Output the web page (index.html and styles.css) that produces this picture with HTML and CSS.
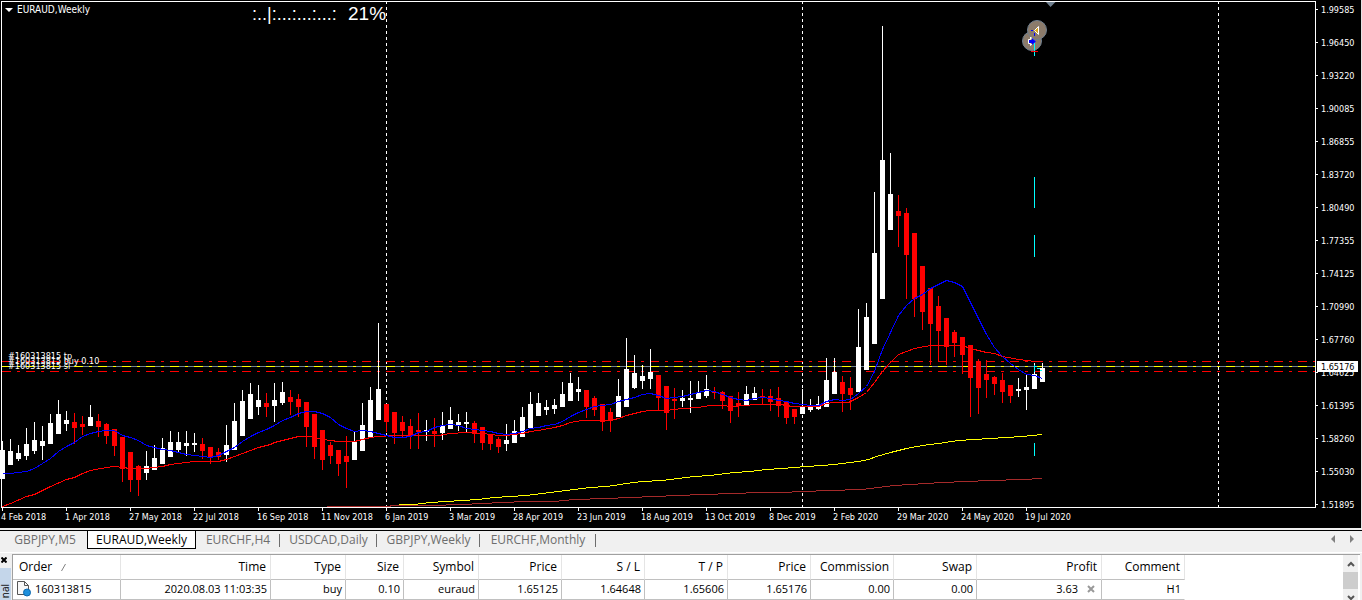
FILE: index.html
```html
<!DOCTYPE html>
<html lang="en">
<head>
<meta charset="utf-8">
<title>EURAUD,Weekly</title>
<link rel="stylesheet" href="styles.css">
</head>
<body>
<main class="chart">
<svg class="chart-svg" viewBox="0 0 1361 528" role="img" aria-label="EURAUD weekly candlestick chart">
  <g class="crisp">
    <path class="separator" d="M386.5 1V507M802.5 1V507M1218.5 1V507"/>
    <path class="level" d="M2 361.5H1315M2 371.5H1315"/>
    <path class="price-line" d="M2 366.5H1315"/>
    <path class="open-line" d="M2 366.5H1315"/>
  </g>
  <g id="candles" class="crisp"></g>
  <g id="averages" class="crisp" transform="translate(.5 .5)"></g>
  <g class="crisp">
    <path class="signal" d="M1034.5 177V208M1034.5 235V257M1034.5 443V456M1034.5 365V372M1035 366.5H1037M1037 368.5H1040M1040 370.5H1042"/>
    <path class="frame" d="M1.5 508V1.5H1315.5V507.5H1"/>
  </g>
  <circle class="pin" cx="1032" cy="41" r="9.5"/>
  <circle class="pin" cx="1037" cy="30" r="9.5"/>
  <path class="pin-left" d="M1038.500 26.500V34.500L1034.500 30.500Z"/>
  <path class="pin-blue" d="M1031 30H1033V31H1031ZM1034 33H1035V36H1034Z"/>
  <path class="pin-right-edge" d="M1028.500 39.500H1030.500V37L1035 41.500L1030.500 45.500V43.500H1028.500Z"/>
  <path class="pin-blue" d="M1029 40H1032V38L1036 41.500L1032 45V43H1029Z"/>
  <path class="signal crisp" d="M1034.5 43V56"/>
  <path class="pin-mark crisp" d="M1031 51.500H1038"/>
  <path class="shift" d="M1046 2H1055.500L1050.500 7Z"/>
  <path class="menu-mark" d="M5 8H13L9 12Z"/>
  <text class="label title" x="17" y="13">EURAUD,Weekly</text>
  <text class="gauge" x="252" y="20">:..|:...:...:...:</text>
  <text class="gauge-value" x="348" y="20">21%</text>
  <text class="label" x="8" y="359">#160313815 tp</text>
  <text class="label" x="8" y="364">#160313815 buy 0.10</text>
  <text class="label" x="8" y="369">#160313815 sl</text>
  <g id="price-axis"></g>
  <rect class="quote-box" x="1317" y="361" width="41" height="11"/>
  <text class="label quote" x="1321" y="370">1.65176</text>
  <g id="time-axis"></g>
</svg>
</main>
<nav class="tabs">
  <button class="tab tab-a" type="button">GBPJPY,M5</button>
  <button class="tab tab-b active" type="button">EURAUD,Weekly</button>
  <button class="tab tab-c ruled" type="button">EURCHF,H4</button>
  <button class="tab tab-d ruled" type="button">USDCAD,Daily</button>
  <button class="tab tab-e ruled" type="button">GBPJPY,Weekly</button>
  <button class="tab tab-f ruled" type="button">EURCHF,Monthly</button>
  <div class="tab-scroll">
    <button class="icon-button" type="button" aria-label="Previous tabs"><svg width="4" height="8"><path d="M4 0V8L0 4Z"/></svg></button>
    <button class="icon-button" type="button" aria-label="Next tabs"><svg width="4" height="8"><path d="M0 0V8L4 4Z"/></svg></button>
  </div>
</nav>
<section class="terminal">
  <aside class="side">
    <button class="close" type="button" aria-label="Close"><svg width="6" height="6"><path d="M.5 .5L5.500 5.500M5.500 .5L.5 5.500"/></svg></button>
    <div class="side-title"><span class="side-text">nal</span></div>
  </aside>
  <div class="orders">
    <table class="grid">
      <colgroup><col class="w-order"><col class="w-time"><col class="w-mid"><col class="w-size"><col class="w-mid"><col class="w-num"><col class="w-num"><col class="w-num"><col class="w-num"><col class="w-num"><col class="w-num"><col class="w-profit"><col class="w-num"></colgroup>
      <thead><tr><th class="first">Order <svg class="sort" width="5" height="7"><path d="M.5 7L4.500 0"/></svg></th><th>Time</th><th>Type</th><th>Size</th><th>Symbol</th><th>Price</th><th>S / L</th><th>T / P</th><th>Price</th><th>Commission</th><th>Swap</th><th>Profit</th><th>Comment</th></tr></thead>
      <tbody><tr><td class="first"><span class="order"><svg width="15" height="16"><path class="sheet" d="M1.500 .5H8.500L12.500 4.500V13.500H1.500Z"/><path class="fold" d="M8.500 .5V4.500H12.500"/><circle class="ball" cx="11" cy="11.500" r="3.500"/></svg>160313815</span></td><td>2020.08.03 11:03:35</td><td>buy</td><td>0.10</td><td>euraud</td><td>1.65125</td><td>1.64648</td><td>1.65606</td><td>1.65176</td><td>0.00</td><td>0.00</td><td><span class="profit">3.63 <button class="icon-button" type="button" aria-label="Close order"><svg width="8" height="8"><path class="cross" d="M1 1L7 7M7 1L1 7"/></svg></button></span></td><td>H1</td></tr></tbody>
    </table>
    <div class="scrollbar">
      <button class="icon-button" type="button" aria-label="Scroll up"><svg width="8" height="6"><path class="chevron" d="M1 5L4 2L7 5"/></svg></button>
      <div class="thumb"></div>
      <button class="icon-button" type="button" aria-label="Scroll down"><svg width="8" height="6"><path class="chevron" d="M1 1L4 4L7 1"/></svg></button>
    </div>
  </div>
</section>
<script src="chart.js"></script>
</body>
</html>
```
FILE: styles.css
```css
* { box-sizing: border-box; }
body { margin: 0; min-height: 100vh; display: flex; flex-direction: column; background: #f0f0f0; color: #000; font: 12px "Open Sans", "Noto Sans", sans-serif; }
button { font: inherit; border: 0; padding: 0; background: none; }

.chart { background: #000; border-right: 1px solid #e3e3e3; }
.chart-svg { display: block; width: 100%; height: auto; }
.crisp { shape-rendering: crispEdges; }
.separator { stroke: #fff; stroke-dasharray: 3 3; }
.level { stroke: #f00; stroke-dasharray: 9 6 3 6; }
.price-line { stroke: #708090; }
.open-line { stroke: #ff0; stroke-dasharray: 9 6 3 6; }
.frame { fill: none; stroke: #fff; }
.signal { fill: none; stroke: #0ff; }
.up { stroke: #fff; }
.down { stroke: #f00; }
.body { stroke-width: 5; }
.average { fill: none; }
.fast { stroke: #00f; }
.medium { stroke: #f00; }
.slow { stroke: #ff0; }
.slowest { stroke: #a52a2a; }
.pin { fill: #8b7b6b; stroke: #708090; }
.pin-left { fill: #daa520; stroke: #fff; }
.pin-right-edge { fill: none; stroke: #fff; }
.pin-blue { fill: #00f; }
.pin-mark { stroke: #f00; }
.shift { fill: #708090; }
.menu-mark { fill: #fff; }
.label { fill: #fff; font: 9px "DejaVu Sans Condensed", "DejaVu Sans", sans-serif; }
.title { font-size: 10px; }
.gauge { fill: #fff; font: 18px "Liberation Sans", sans-serif; }
.gauge-value { fill: #fff; font: 19px "Liberation Sans", sans-serif; }
.quote-box { fill: #fff; }
.quote { fill: #000; }
.tick { stroke: #fff; }

.tabs { display: flex; height: 23px; margin-top: 2px; padding-bottom: 3px; border-top: 1px solid #000; border-bottom: 1px solid #fff; }
.tab { padding-bottom: 2px; color: #6d6d6d; }
.tab-a { width: 87px; padding-left: 3px; }
.tab-b { width: 109px; }
.tab-c { width: 84px; }
.tab-d { width: 97px; }
.tab-e { width: 103px; }
.tab-f { width: 116px; }
.active { background: #fff; border: 1px solid #000; border-top: 0; color: #000; }
.ruled { background: linear-gradient(#6d6d6d, #6d6d6d) right 3px / 1px 13px no-repeat; }
.tab-scroll { margin-left: auto; display: flex; align-items: center; gap: 15px; padding: 0 8px 2px 0; }
.icon-button { display: flex; align-items: center; fill: #808080; }

.terminal { flex: 1; display: flex; margin-top: 1px; padding-right: 2px; }
.side { width: 12px; display: flex; flex-direction: column; }
.close { height: 14px; padding: 3px 0 0 1px; display: flex; align-items: flex-start; }
.close path { stroke: #000; stroke-width: 2; }
.side-title { flex: 1; width: 11px; padding-top: 16px; background: #c4d6ea; }
.side-text { display: block; writing-mode: vertical-rl; transform: rotate(180deg); font-size: 10px; line-height: 11px; }
.orders { flex: 1; display: flex; justify-content: space-between; background: #fff; border-top: 1px solid #a0a0a0; border-left: 1px solid #a0a0a0; }
.grid { table-layout: fixed; width: 1172px; height: 45px; border-collapse: separate; border-spacing: 0; }
.w-order { width: 108px; }
.w-time { width: 150px; }
.w-mid { width: 75px; }
.w-size { width: 58px; }
.w-num { width: 83px; }
.w-profit { width: 125px; }
th { height: 25px; padding: 0 4px 2px; font-weight: 400; text-align: right; border-right: 1px solid #e5e5e5; border-bottom: 1px solid #c0c0c0; white-space: nowrap; }
td { height: 20px; padding: 0 3px 2px; font-size: 11px; line-height: 16px; text-align: right; border-right: 1px solid #c0c0c0; border-bottom: 1px solid #c0c0c0; white-space: nowrap; }
td:last-child { border-right-color: #fff; }
th.first { text-align: left; padding-left: 6px; }
td.first { text-align: left; }
.sort { margin-left: 6px; }
.sort path { stroke: #808080; }
.order, .profit { display: flex; align-items: center; gap: 4px; }
.profit { justify-content: flex-end; gap: 9px; padding-right: 3px; }
.sheet { fill: #f8f8f8; stroke: #555; }
.fold { fill: none; stroke: #555; }
.ball { fill: #1e90dc; stroke: #0a66ad; }
.cross { stroke: #999; stroke-width: 2; }
.scrollbar { width: 15px; margin-right: 2px; background: #f0f0f0; display: flex; flex-direction: column; align-items: center; }
.scrollbar .icon-button { height: 17px; }
.thumb { width: 15px; height: 17px; background: #cdcdcd; }
.chevron { fill: none; stroke: #555; stroke-width: 2; }
```
FILE: chart.js
```js
// One weekly bar every 8 units: direction, high, body top, body bottom, low.
const bars = `
w 441 450 479 479|w 439 451 465 465|w 445 453 459 461|w 428 444 456 460|w 422 440 451 454|w 426 441 446 460
w 414 423 444 444|w 400 414 434 434|w 411 420 424 431|r 413 422 428 444|r 416 424 427 435|w 405 417 426 426
r 414 421 427 437|r 423 424 436 444|r 429 429 446 456|r 437 437 469 482|r 452 452 480 492|r 465 466 480 496
w 451 466 473 480|w 445 458 470 470|w 438 448 464 464|w 431 442 457 457|w 432 442 450 452|w 431 443 446 456
w 433 443 445 452|r 438 444 451 459|r 447 447 457 464|r 448 452 457 460|w 425 445 455 462|w 403 421 450 450
w 390 401 436 436|w 383 394 419 419|w 385 400 407 415|r 393 403 407 417|w 383 400 406 422|w 382 392 403 405
r 390 397 402 415|r 394 399 407 417|r 402 402 427 447|r 414 414 447 459|r 430 430 460 470|r 442 445 456 464
r 450 450 464 476|r 436 456 462 488|w 432 442 460 460|w 403 425 451 451|w 387 400 437 437|w 323 389 420 420
r 404 404 422 432|r 412 412 433 444|r 416 422 431 437|r 419 426 436 449|r 413 430 432 449|w 420 430 432 441
r 418 431 434 447|w 412 426 433 440|w 407 420 429 429|w 414 422 425 431|w 412 422 424 432|r 421 423 434 443
r 427 427 443 450|r 434 434 444 450|r 437 439 447 453|w 424 440 444 451|w 420 431 443 443|w 407 417 437 437
w 392 404 428 428|w 393 403 416 416|w 400 407 410 415|w 399 405 409 414|w 382 394 407 407|w 373 383 401 401
w 377 389 392 401|r 390 390 407 418|r 396 398 410 416|r 404 404 422 431|r 408 412 421 432|w 379 396 417 417
w 338 369 407 407|w 355 373 388 389|w 365 376 381 389|w 349 372 379 389|r 375 375 398 410|r 386 386 413 430
r 388 399 401 419|w 390 398 401 407|w 381 398 400 413|w 381 392 399 399|w 375 389 396 398|r 387 392 393 399
r 391 392 401 409|r 396 396 411 423|r 392 403 406 417|w 386 394 405 405|w 387 393 400 400|r 389 396 397 404
r 389 396 402 411|r 387 398 406 417|r 401 402 418 424|r 409 409 417 424|w 389 406 414 414|w 399 406 410 412
w 396 404 409 410|w 358 380 407 407|w 358 372 394 394|r 376 382 394 412|r 377 388 395 410|w 309 347 392 392
w 303 317 370 370|w 192 253 344 344|w 26 160 299 299|w 153 194 230 230|r 195 211 216 247|r 208 213 255 299
r 233 233 299 317|r 266 266 312 330|r 288 288 324 365|r 296 306 331 362|r 318 318 347 365|r 330 332 343 357
r 337 337 355 374|r 345 345 378 417|r 359 361 388 414|r 360 374 380 398|r 376 377 384 395|r 373 380 392 403
r 385 385 396 403|w 378 389 391 397|w 375 387 390 410|w 363 374 389 389|w 363 368 382 382`
  .trim().split(/[|\n]/).map(row => row.split(" "));

const averages = {
  slowest: "326,506 388,506 392,505 430,505 462,504 482,503 502,502 526,501 554,501 574,499 606,498 630,497 654,496 678,495 702,494 734,493 758,492 780,492 804,491 828,490 862,489 878,487 894,485 926,483 942,482 966,481 990,480 1022,479 1042,478",
  slow: "398,504 414,504 430,502 446,501 462,500 478,499 494,497 510,496 526,495 542,493 558,491 574,489 590,487 606,486 614,485 626,483 642,481 662,480 678,478 694,476 710,475 734,472 750,471 766,469 782,468 806,466 822,465 834,464 850,462 858,461 868,459 876,456 890,452 906,448 922,445 938,443 958,440 990,438 1022,436 1042,434",
  medium: "2,506 10,503 26,496 34,494 50,486 66,479 74,477 82,473 90,470 106,467 114,466 130,468 146,468 162,466 170,464 186,462 194,461 218,461 226,459 234,456 242,453 250,450 258,447 270,444 274,442 282,440 290,438 298,436 310,436 322,439 338,441 354,441 362,439 370,437 378,436 394,435 438,435 450,433 466,432 482,433 490,434 498,435 506,435 522,433 530,431 538,430 554,427 562,425 570,422 582,420 610,420 618,418 626,415 634,413 642,411 650,410 666,410 682,408 698,407 710,405 722,405 730,406 746,405 754,404 780,404 792,406 818,406 826,403 834,402 848,402 858,397 866,392 874,382 882,371 890,362 898,354 914,348 930,345 962,345 970,348 986,352 994,353 1002,356 1018,359 1026,360 1034,361 1042,361",
  fast: "2,473 10,473 26,471 34,468 42,463 50,458 58,451 66,446 74,442 82,436 90,433 98,431 106,430 114,430 122,435 130,437 138,440 146,445 154,447 162,449 170,450 178,452 186,454 194,455 202,456 210,457 218,455 226,451 234,447 242,441 250,436 258,432 266,429 274,425 282,420 290,417 298,413 306,411 314,411 322,413 330,417 338,424 346,428 354,431 362,430 370,431 378,433 386,435 394,437 402,437 410,436 418,432 426,431 434,427 442,425 450,424 458,425 466,428 474,429 482,430 490,431 498,433 506,434 514,433 522,431 530,428 538,427 546,425 554,424 562,421 570,416 578,412 586,409 594,406 602,405 610,404 618,401 626,399 634,397 642,394 650,393 658,395 666,398 674,397 682,396 690,394 698,392 706,390 714,391 722,394 730,397 738,399 746,400 754,398 762,397 770,398 778,400 786,401 794,403 802,404 810,405 818,405 826,401 834,399 842,400 850,399 858,393 866,386 874,371 882,349 890,332 898,315 906,305 914,298 922,294 930,288 938,284 946,280 954,282 962,286 970,302 978,318 986,334 994,347 1002,356 1010,363 1018,369 1026,374 1034,375 1042,378"
};

const prices = ["1.99585", "1.96450", "1.93220", "1.90085", "1.86855", "1.83720", "1.80490", "1.77355", "1.74125", "1.70990", "1.67760", "1.64625", "1.61395", "1.58260", "1.55030", "1.51895"];
const dates = ["4 Feb 2018", "1 Apr 2018", "27 May 2018", "22 Jul 2018", "16 Sep 2018", "11 Nov 2018", "6 Jan 2019", "3 Mar 2019", "28 Apr 2019", "23 Jun 2019", "18 Aug 2019", "13 Oct 2019", "8 Dec 2019", "2 Feb 2020", "29 Mar 2020", "24 May 2020", "19 Jul 2020"];

const fill = (id, markup) => { document.getElementById(id).innerHTML = markup; };

fill("candles", bars.map(([kind, high, top, bottom, low], i) => {
  const x = 8 * i + 2.5;
  const tone = kind === "w" ? "up" : "down";
  return `<path class="${tone}" d="M${x} ${high}V${low}"/><path class="${tone} body" d="M${x} ${top}V${bottom}"/>`;
}).join(""));

fill("averages", Object.entries(averages).map(([name, points]) =>
  `<polyline class="average ${name}" points="${points}"/>`).join(""));

fill("price-axis", prices.map((price, i) =>
  `<path class="tick crisp" d="M1316 ${33 * i + 9.5}H1318"/><text class="label" x="1321" y="${33 * i + 13}">${price}</text>`).join(""));

fill("time-axis", dates.map((date, i) =>
  `<path class="tick crisp" d="M${64 * i + 2.5} 508V511"/><text class="label" x="${64 * i + 1}" y="520">${date}</text>`).join(""));
```
